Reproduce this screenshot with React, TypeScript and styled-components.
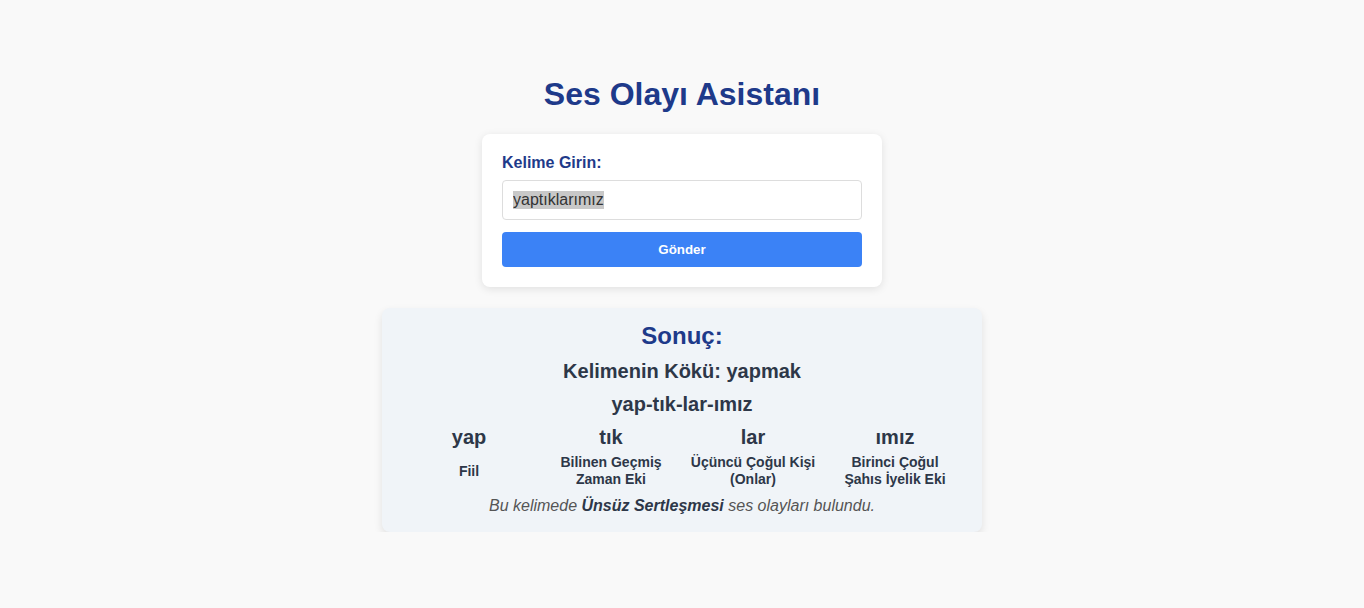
import { useEffect, useRef } from "react";
import styled, { createGlobalStyle } from "styled-components";

const GlobalStyle = createGlobalStyle`
	* {
		box-sizing: border-box;
	}
	body {
		margin: 0;
		background-color: #f9f9f9;
		font-family: "Liberation Sans", Arial, sans-serif;
		color: #2d3748;
	}
`;

const parts = [
	{ syllable: "yap", desc: "Fiil" },
	{ syllable: "tık", desc: "Bilinen Geçmiş Zaman Eki" },
	{ syllable: "lar", desc: "Üçüncü Çoğul Kişi (Onlar)" },
	{ syllable: "ımız", desc: "Birinci Çoğul Şahıs İyelik Eki" },
];

export default function App() {
	const inputRef = useRef<HTMLInputElement>(null);

	useEffect(() => {
		inputRef.current?.select();
	}, []);

	return (
		<>
			<GlobalStyle />
			<Page>
				<Title>Ses Olayı Asistanı</Title>
				<FormCard>
					<Label htmlFor="word">Kelime Girin:</Label>
					<WordInput id="word" ref={inputRef} defaultValue="yaptıklarımız" />
					<SubmitButton type="button">Gönder</SubmitButton>
				</FormCard>
				<ResultCard>
					<ResultTitle>Sonuç:</ResultTitle>
					<ResultLine>Kelimenin Kökü: yapmak</ResultLine>
					<ResultLine>yap-tık-lar-ımız</ResultLine>
					<PartsGrid>
						{parts.map((p) => (
							<Syllable key={p.syllable}>{p.syllable}</Syllable>
						))}
						{parts.map((p) => (
							<Description key={p.syllable}>{p.desc}</Description>
						))}
					</PartsGrid>
					<Note>
						Bu kelimede <strong>Ünsüz Sertleşmesi</strong> ses olayları bulundu.
					</Note>
				</ResultCard>
			</Page>
		</>
	);
}

const Page = styled.div`
	display: flex;
	flex-direction: column;
	align-items: center;
	padding-top: 55px;
`;

const Title = styled.h1`
	margin: 21px 0 21px;
	font-size: 32px;
	font-weight: bold;
	color: #1e3a8a;
`;

const FormCard = styled.div`
	width: 400px;
	background-color: #fff;
	border-radius: 8px;
	padding: 20px;
	box-shadow: 0 2px 8px rgba(0, 0, 0, 0.1);
	display: flex;
	flex-direction: column;
`;

const Label = styled.label`
	font-size: 16px;
	font-weight: bold;
	color: #1e3a8a;
	line-height: 18px;
	margin-bottom: 8px;
`;

const WordInput = styled.input`
	height: 40px;
	width: 100%;
	padding: 0 10px;
	border: 1px solid #ddd;
	border-radius: 4px;
	font-family: "Liberation Sans", Arial, sans-serif;
	font-size: 16px;
	color: #333;
	margin-bottom: 12px;
	&:focus {
		outline: none;
	}
	&::selection {
		background-color: #c8c8c8;
		color: #333;
	}
`;

const SubmitButton = styled.button`
	height: 35px;
	width: 100%;
	border: none;
	border-radius: 4px;
	background-color: #3b82f6;
	color: #fff;
	font-family: "Liberation Sans", Arial, sans-serif;
	font-size: 13.33px;
	font-weight: bold;
	cursor: pointer;
`;

const ResultCard = styled.div`
	width: 600px;
	margin-top: 21px;
	background-color: #f0f4f8;
	border-radius: 8px;
	padding: 14px 16px 17px;
	box-shadow: 0 4px 8px rgba(0, 0, 0, 0.1);
	display: flex;
	flex-direction: column;
	align-items: center;
	text-align: center;
`;

const ResultTitle = styled.h2`
	margin: 0;
	font-size: 24px;
	line-height: 28px;
	color: #1e3a8a;
`;

const ResultLine = styled.p`
	margin: 10px 0 0;
	font-size: 20px;
	line-height: 23px;
	font-weight: bold;
`;

const PartsGrid = styled.div`
	width: 100%;
	margin-top: 10px;
	display: grid;
	grid-template-columns: repeat(4, 1fr);
	align-items: center;
	row-gap: 5px;
`;

const Syllable = styled.div`
	font-size: 20px;
	line-height: 23px;
	font-weight: bold;
`;

const Description = styled.div`
	font-size: 14px;
	line-height: 17px;
	font-weight: bold;
	padding: 0 8px;
`;

const Note = styled.p`
	margin: 9px 0 0;
	font-size: 16px;
	line-height: 18px;
	font-style: italic;
	color: #555;
	strong {
		color: #2d3748;
	}
`;
